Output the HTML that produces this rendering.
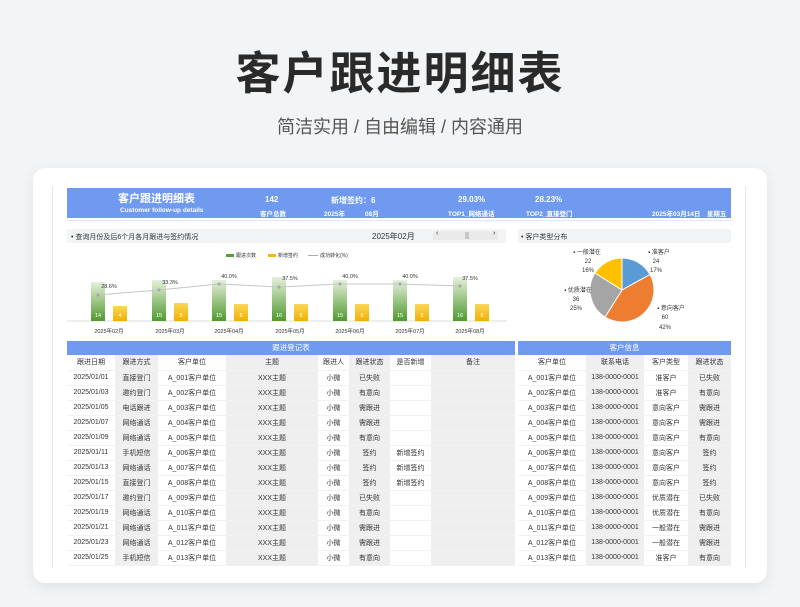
<!DOCTYPE html>
<html><head><meta charset="utf-8"><style>
*{margin:0;padding:0;box-sizing:border-box}
body{width:800px;height:607px;background:#f2f4f6;font-family:"Liberation Sans","Noto Sans CJK SC",sans-serif;position:relative;overflow:hidden;color:#222}
.a{position:absolute}
h1{position:absolute;left:0;width:800px;top:37px;text-align:center;font-size:45px;font-weight:bold;color:#2a2a2a;letter-spacing:2px}
.sub{position:absolute;left:0;width:800px;top:113px;text-align:center;font-size:18px;color:#555}
.card{position:absolute;left:33px;top:168px;width:734px;height:415px;background:#fff;border-radius:12px;box-shadow:0 4px 14px rgba(0,0,0,.08)}
.t{position:absolute;font-size:7px;color:#333;text-align:center;white-space:nowrap}
.w{font-weight:bold}
table{border-collapse:collapse;position:absolute;font-size:7px;color:#333}
td{height:15px;text-align:center;border-bottom:1px solid #f2f2f2;white-space:nowrap;padding:0}
.g{background:#efefef}
.band{position:absolute;height:14px;background:#6f9af0;color:#fff;font-size:7.5px;text-align:center;line-height:14px}
</style></head><body>
<h1>客户跟进明细表</h1>
<div class="sub">简洁实用 / 自由编辑 / 内容通用</div>
<div class="card"></div>
<div class="a" style="left:52px;top:186px;width:1px;height:382px;background:#e6e6e6"></div>
<div class="a" style="left:67px;top:188px;width:664px;height:30px;background:#6f9af0"></div>
<div class="a" style="left:67px;top:220px;width:664px;height:1px;background:#e4e8ee"></div>
<div class="t" style="left:118px;top:190px;font-size:11px;font-weight:bold;color:#fff">客户跟进明细表</div>
<div class="t w" style="left:120px;top:207px;font-size:6.5px;color:#fff">Customer follow-up details</div>
<div class="t w" style="left:265px;top:195px;font-size:8px;color:#fff">142</div>
<div class="t w" style="left:260px;top:208px;font-size:6.5px;color:#fff">客户总数</div>
<div class="t w" style="left:331px;top:195px;font-size:8px;color:#fff">新增签约：6</div>
<div class="t w" style="left:324px;top:208px;font-size:6.5px;color:#fff">2025年</div>
<div class="t w" style="left:365px;top:208px;font-size:6.5px;color:#fff">08月</div>
<div class="t w" style="left:458px;top:195px;font-size:8px;color:#fff">29.03%</div>
<div class="t w" style="left:448px;top:208px;font-size:6.5px;color:#fff">TOP1_网络通话</div>
<div class="t w" style="left:535px;top:195px;font-size:8px;color:#fff">28.23%</div>
<div class="t w" style="left:526px;top:208px;font-size:6.5px;color:#fff">TOP2_直接登门</div>
<div class="t w" style="left:652px;top:208px;font-size:6.5px;color:#fff">2025年03月14日　星期五</div>

<div class="a" style="left:67px;top:229px;width:439px;height:14px;background:#f3f4f6"></div>
<div class="t" style="left:71px;top:232px">• 查询月份及后6个月各月跟进与签约情况</div>
<div class="t" style="left:372px;top:231px;font-size:8px">2025年02月</div>
<div class="a" style="left:433px;top:231px;width:65px;height:9px;background:#eaeaea"></div>
<div class="a" style="left:465px;top:232px;width:4px;height:7px;background:#c8c8c8"></div>
<div class="t" style="left:436px;top:230px">‹</div><div class="t" style="left:493px;top:230px">›</div>
<div class="a" style="left:518px;top:229px;width:213px;height:14px;background:#f3f4f6"></div>
<div class="t" style="left:521px;top:232px">• 客户类型分布</div>

<div class="a" style="left:226px;top:254px;width:8px;height:3px;background:#5a9e3a"></div>
<div class="t" style="left:236px;top:252px;font-size:5px">跟进次数</div>
<div class="a" style="left:268px;top:254px;width:8px;height:3px;background:#f5b800"></div>
<div class="t" style="left:278px;top:252px;font-size:5px">新增签约</div>
<div class="a" style="left:308px;top:255px;width:10px;height:1px;background:#aaa"></div>
<div class="t" style="left:320px;top:252px;font-size:5px">成功转化(%)</div>

<svg class="a" style="left:67px;top:260px" width="440" height="80">
<defs><linearGradient id="gr" x1="0" y1="0" x2="0" y2="1"><stop offset="0" stop-color="#e6f0dc"/><stop offset="1" stop-color="#4f9a2e"/></linearGradient>
<linearGradient id="yl" x1="0" y1="0" x2="0" y2="1"><stop offset="0" stop-color="#fbd65a"/><stop offset="1" stop-color="#f0b000"/></linearGradient></defs>
<line x1="0" y1="61" x2="440" y2="61" stroke="#ddd" stroke-width="1"/>
<g font-size="5.5" fill="#fff" text-anchor="middle" font-family="Liberation Sans">
<rect x="24" y="22" width="14" height="39" fill="url(#gr)"/><rect x="46" y="46" width="14" height="15" fill="url(#yl)"/><text x="31" y="57">14</text><text x="53" y="57">4</text>
<rect x="85" y="20" width="14" height="41" fill="url(#gr)"/><rect x="107" y="43" width="14" height="18" fill="url(#yl)"/><text x="92" y="57">15</text><text x="114" y="57">5</text>
<rect x="145" y="20" width="14" height="41" fill="url(#gr)"/><rect x="167" y="44" width="14" height="17" fill="url(#yl)"/><text x="152" y="57">15</text><text x="174" y="57">6</text>
<rect x="205" y="17" width="14" height="44" fill="url(#gr)"/><rect x="227" y="44" width="14" height="17" fill="url(#yl)"/><text x="212" y="57">16</text><text x="234" y="57">6</text>
<rect x="266" y="20" width="14" height="41" fill="url(#gr)"/><rect x="288" y="44" width="14" height="17" fill="url(#yl)"/><text x="273" y="57">15</text><text x="295" y="57">6</text>
<rect x="326" y="20" width="14" height="41" fill="url(#gr)"/><rect x="348" y="44" width="14" height="17" fill="url(#yl)"/><text x="333" y="57">15</text><text x="355" y="57">6</text>
<rect x="386" y="17" width="14" height="44" fill="url(#gr)"/><rect x="408" y="44" width="14" height="17" fill="url(#yl)"/><text x="393" y="57">16</text><text x="415" y="57">6</text>
</g>
<polyline points="31,35 92,30 152,24 212,27 273,24 333,24 393,26" fill="none" stroke="#c6c6c6" stroke-width="1"/>
<g fill="#aaa"><circle cx="31" cy="35" r="1.6"/><circle cx="92" cy="30" r="1.6"/><circle cx="152" cy="24" r="1.6"/><circle cx="212" cy="27" r="1.6"/><circle cx="273" cy="24" r="1.6"/><circle cx="333" cy="24" r="1.6"/><circle cx="393" cy="26" r="1.6"/></g>
<g font-size="5.5" fill="#333" text-anchor="middle" font-family="Liberation Sans">
<text x="42" y="28">28.6%</text><text x="103" y="24">33.3%</text><text x="162" y="18">40.0%</text><text x="223" y="20">37.5%</text><text x="283" y="18">40.0%</text><text x="343" y="18">40.0%</text><text x="403" y="20">37.5%</text>
<text x="42" y="73">2025年02月</text><text x="103" y="73">2025年03月</text><text x="162" y="73">2025年04月</text><text x="223" y="73">2025年05月</text><text x="283" y="73">2025年06月</text><text x="343" y="73">2025年07月</text><text x="403" y="73">2025年08月</text>
</g>
</svg>

<svg class="a" style="left:518px;top:243px" width="213" height="95">
<g transform="translate(-518,-243)" stroke="#fff" stroke-width="1">
<path d="M622,290 L622,258 A32,32 0 0 1 650,274.5 Z" fill="#5b9bd5"/>
<path d="M622,290 L650,274.5 A32,32 0 0 1 605,317.1 Z" fill="#ed7d31"/>
<path d="M622,290 L605,317.1 A32,32 0 0 1 594.9,273 Z" fill="#a5a5a5"/>
<path d="M622,290 L594.9,273 A32,32 0 0 1 622,258 Z" fill="#ffc000"/>
</g>
<g font-size="6" fill="#333" text-anchor="middle" font-family="Liberation Sans,Noto Sans CJK SC">
<text x="69" y="11">▪ 一般潜在</text><text x="70" y="20">22</text><text x="70" y="29">16%</text>
<text x="141" y="11">▪ 准客户</text><text x="138" y="20">24</text><text x="138" y="29">17%</text>
<text x="60" y="49">▪ 优质潜在</text><text x="58" y="58">36</text><text x="58" y="67">25%</text>
<text x="153" y="67">▪ 意向客户</text><text x="147" y="76">60</text><text x="147" y="86">42%</text>
</g>
</svg>

<div class="band" style="left:67px;top:341px;width:448px">跟进登记表</div>
<div class="band" style="left:518px;top:341px;width:213px">客户信息</div>

<table style="left:67px;top:355px;width:448px">
<colgroup><col style="width:48px"><col style="width:43px"><col style="width:68px"><col style="width:92px"><col style="width:31px"><col style="width:41px"><col style="width:41px"><col style="width:84px"></colgroup>
<tr><td>跟进日期</td><td class="g">跟进方式</td><td>客户单位</td><td class="g">主题</td><td>跟进人</td><td class="g">跟进状态</td><td>是否新增</td><td class="g">备注</td></tr>
<tr><td>2025/01/01</td><td class="g">直接登门</td><td>A_001客户单位</td><td class="g">XXX主题</td><td>小微</td><td class="g">已失败</td><td></td><td class="g"></td></tr>
<tr><td>2025/01/03</td><td class="g">邀约登门</td><td>A_002客户单位</td><td class="g">XXX主题</td><td>小微</td><td class="g">有意向</td><td></td><td class="g"></td></tr>
<tr><td>2025/01/05</td><td class="g">电话跟进</td><td>A_003客户单位</td><td class="g">XXX主题</td><td>小微</td><td class="g">需跟进</td><td></td><td class="g"></td></tr>
<tr><td>2025/01/07</td><td class="g">网络通话</td><td>A_004客户单位</td><td class="g">XXX主题</td><td>小微</td><td class="g">需跟进</td><td></td><td class="g"></td></tr>
<tr><td>2025/01/09</td><td class="g">网络通话</td><td>A_005客户单位</td><td class="g">XXX主题</td><td>小微</td><td class="g">有意向</td><td></td><td class="g"></td></tr>
<tr><td>2025/01/11</td><td class="g">手机短信</td><td>A_006客户单位</td><td class="g">XXX主题</td><td>小微</td><td class="g">签约</td><td>新增签约</td><td class="g"></td></tr>
<tr><td>2025/01/13</td><td class="g">网络通话</td><td>A_007客户单位</td><td class="g">XXX主题</td><td>小微</td><td class="g">签约</td><td>新增签约</td><td class="g"></td></tr>
<tr><td>2025/01/15</td><td class="g">直接登门</td><td>A_008客户单位</td><td class="g">XXX主题</td><td>小微</td><td class="g">签约</td><td>新增签约</td><td class="g"></td></tr>
<tr><td>2025/01/17</td><td class="g">邀约登门</td><td>A_009客户单位</td><td class="g">XXX主题</td><td>小微</td><td class="g">已失败</td><td></td><td class="g"></td></tr>
<tr><td>2025/01/19</td><td class="g">网络通话</td><td>A_010客户单位</td><td class="g">XXX主题</td><td>小微</td><td class="g">有意向</td><td></td><td class="g"></td></tr>
<tr><td>2025/01/21</td><td class="g">网络通话</td><td>A_011客户单位</td><td class="g">XXX主题</td><td>小微</td><td class="g">需跟进</td><td></td><td class="g"></td></tr>
<tr><td>2025/01/23</td><td class="g">网络通话</td><td>A_012客户单位</td><td class="g">XXX主题</td><td>小微</td><td class="g">需跟进</td><td></td><td class="g"></td></tr>
<tr><td>2025/01/25</td><td class="g">手机短信</td><td>A_013客户单位</td><td class="g">XXX主题</td><td>小微</td><td class="g">有意向</td><td></td><td class="g"></td></tr>
</table>

<table style="left:518px;top:355px;width:213px">
<colgroup><col style="width:68px"><col style="width:58px"><col style="width:44px"><col style="width:43px"></colgroup>
<tr><td>客户单位</td><td class="g">联系电话</td><td>客户类型</td><td class="g">跟进状态</td></tr>
<tr><td>A_001客户单位</td><td class="g">138-0000-0001</td><td>准客户</td><td class="g">已失败</td></tr>
<tr><td>A_002客户单位</td><td class="g">138-0000-0001</td><td>准客户</td><td class="g">有意向</td></tr>
<tr><td>A_003客户单位</td><td class="g">138-0000-0001</td><td>意向客户</td><td class="g">需跟进</td></tr>
<tr><td>A_004客户单位</td><td class="g">138-0000-0001</td><td>意向客户</td><td class="g">需跟进</td></tr>
<tr><td>A_005客户单位</td><td class="g">138-0000-0001</td><td>意向客户</td><td class="g">有意向</td></tr>
<tr><td>A_006客户单位</td><td class="g">138-0000-0001</td><td>意向客户</td><td class="g">签约</td></tr>
<tr><td>A_007客户单位</td><td class="g">138-0000-0001</td><td>意向客户</td><td class="g">签约</td></tr>
<tr><td>A_008客户单位</td><td class="g">138-0000-0001</td><td>意向客户</td><td class="g">签约</td></tr>
<tr><td>A_009客户单位</td><td class="g">138-0000-0001</td><td>优质潜在</td><td class="g">已失败</td></tr>
<tr><td>A_010客户单位</td><td class="g">138-0000-0001</td><td>优质潜在</td><td class="g">有意向</td></tr>
<tr><td>A_011客户单位</td><td class="g">138-0000-0001</td><td>一般潜在</td><td class="g">需跟进</td></tr>
<tr><td>A_012客户单位</td><td class="g">138-0000-0001</td><td>一般潜在</td><td class="g">需跟进</td></tr>
<tr><td>A_013客户单位</td><td class="g">138-0000-0001</td><td>准客户</td><td class="g">有意向</td></tr>
</table>
<div class="a" style="left:745px;top:186px;width:1px;height:382px;background:#e6e6e6"></div>
</body></html>
